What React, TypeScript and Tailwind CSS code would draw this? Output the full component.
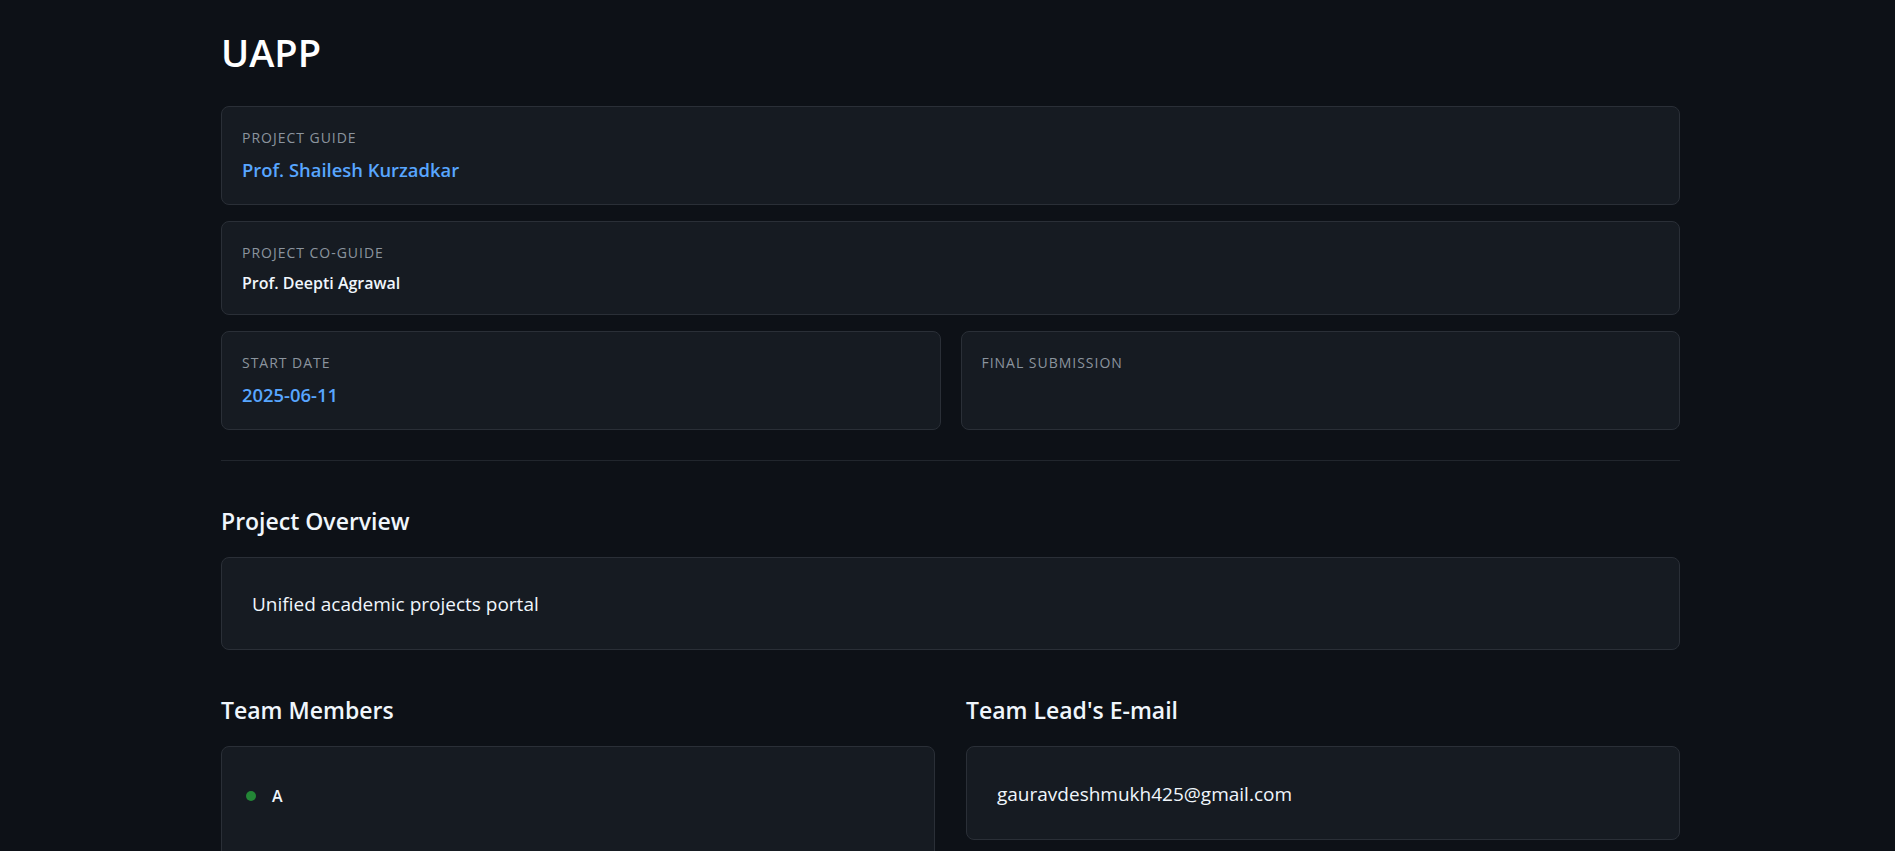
import type { ReactNode } from "react";

type Info = { label: string; value: string; tone: "blue" | "white" | "empty" };

const FONT = "font-['Open_Sans',_'Noto_Sans',_sans-serif]";

function Label({ children }: { children: ReactNode }) {
  return (
    <div className="text-[14px] leading-5 uppercase tracking-[0.07em] text-[#8b949e]">
      {children}
    </div>
  );
}

function InfoCard({ item }: { item: Info }) {
  return (
    <div
      className={
        item.tone === "white"
          ? "rounded-lg border border-[#2a2f37] bg-[#161b22] px-5 pt-[21px] pb-[19px]"
          : "rounded-lg border border-[#2a2f37] bg-[#161b22] px-5 pt-[21px] pb-5"
      }
    >
      <Label>{item.label}</Label>
      {item.tone === "blue" && (
        <div className="mt-2 text-[18.4px] leading-7 font-semibold text-[#58a6ff]">{item.value}</div>
      )}
      {item.tone === "white" && (
        <div className="mt-2 text-[16px] leading-6 font-semibold text-[#f0f6fc]">{item.value}</div>
      )}
      {item.tone === "empty" && <div className="mt-2 h-7" />}
    </div>
  );
}

function SectionTitle({ children }: { children: ReactNode }) {
  return (
    <h2 className="mb-5 text-[23px] leading-8 font-semibold text-[#f0f6fc]">{children}</h2>
  );
}

export default function App() {
  const members = ["A"];

  return (
    <div className={`min-h-screen bg-[#0d1117] ${FONT} text-[#e6edf3]`}>
      <div className="pl-[221px] pr-[215px] pt-7 pb-16">
        <h1 className="mb-[30px] text-[38px] leading-[48px] font-semibold text-white">UAPP</h1>

        <div className="flex flex-col gap-4">
          <InfoCard item={{ label: "Project Guide", value: "Prof. Shailesh Kurzadkar", tone: "blue" }} />
          <InfoCard item={{ label: "Project Co-Guide", value: "Prof. Deepti Agrawal", tone: "white" }} />
          <div className="grid grid-cols-2 gap-5">
            <InfoCard item={{ label: "Start Date", value: "2025-06-11", tone: "blue" }} />
            <InfoCard item={{ label: "Final Submission", value: "", tone: "empty" }} />
          </div>
        </div>

        <hr className="mt-[30px] border-t border-[#21262d]" />

        <section className="mt-[44px]">
          <SectionTitle>Project Overview</SectionTitle>
          <div className="rounded-lg border border-[#2a2f37] bg-[#161b22] px-[30px] pt-[33px] pb-[31px]">
            <p className="text-[19px] leading-[27px] text-[#f0f6fc]">Unified academic projects portal</p>
          </div>
        </section>

        <div className="mt-[44px] grid grid-cols-2 gap-[31px]">
          <section>
            <SectionTitle>Team Members</SectionTitle>
            <div className="min-h-[160px] rounded-lg border border-[#2a2f37] bg-[#161b22] px-6 pt-[26px] pb-6">
              <ul>
                {members.map((m) => (
                  <li key={m} className="flex items-center gap-4 py-[11px]">
                    <span className="h-2.5 w-2.5 rounded-full bg-[#238636]" />
                    <span className="text-[16px] leading-6 font-semibold text-[#f0f6fc]">{m}</span>
                  </li>
                ))}
              </ul>
            </div>
          </section>
          <section>
            <SectionTitle>Team Lead's E-mail</SectionTitle>
            <div className="rounded-lg border border-[#2a2f37] bg-[#161b22] px-[30px] pt-[34px] pb-[31px]">
              <p className="text-[19px] leading-[27px] text-[#f0f6fc]">gauravdeshmukh425@gmail.com</p>
            </div>
          </section>
        </div>
      </div>
    </div>
  );
}
